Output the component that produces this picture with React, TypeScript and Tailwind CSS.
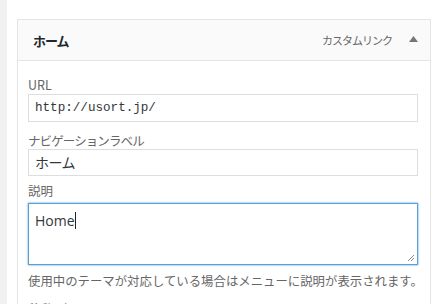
import React from 'react';

const jp = "font-['Noto_Sans_CJK_JP','Noto_Sans',sans-serif]";

export default function App() {
  return (
    <div className={`flex h-[304px] w-[444px] overflow-hidden bg-white ${jp}`}>
      <div className="w-[7px] shrink-0 bg-[#f1f1f1]" />
      <div className="pl-[10px] pt-[19px]">
        <div className="w-[414px] border border-b-0 border-[#e5e5e5]">
          {/* header */}
          <div className="flex h-[41px] items-center border-b border-[#e5e5e5] bg-[#fafafa] pl-[15px] pr-[12px]">
            <span className="text-[13px] font-bold leading-none tracking-[-1px] text-[#23282d]">ホーム</span>
            <span className="ml-auto text-[11px] leading-none tracking-[-1px] text-[#666]">カスタムリンク</span>
            <svg width="9" height="6" viewBox="0 0 9 6" className="ml-[17px] mb-[3px]">
              <path d="M0 6 L4.5 0 L9 6 Z" fill="#72777c" />
            </svg>
          </div>

          {/* body */}
          <div className="pl-[10px] pr-[12px] pt-[15px]">
            <div className="h-[18px] text-[12.5px] leading-[18px] text-[#666]">URL</div>
            <div className="flex h-[28px] items-center border border-[#ddd] px-[6px] font-['Liberation_Mono',monospace] text-[12.6px] text-[#32373c]">
              http://usort.jp/
            </div>

            <div className="mt-[10px] h-[17px] text-[12.5px] leading-[17px] tracking-[-0.9px] text-[#666]">ナビゲーションラベル</div>
            <div className="flex h-[27px] items-center border border-[#ddd] px-[6px] text-[14px] tracking-[-0.5px] text-[#32373c]">
              ホーム
            </div>

            <div className="mt-[6px] h-[18px] text-[12.5px] leading-[18px] text-[#666]">説明</div>
            <div className="relative mt-[3px] h-[62px] border border-[#5b9dd9] px-[6px] pt-[3px] shadow-[0_0_2px_rgba(30,140,190,0.8)]">
              <span className="font-['Open_Sans',sans-serif] text-[14px] leading-[20px] text-[#32373c]">Home</span>
              <span className="inline-block h-[17px] w-px translate-y-[3px] bg-[#222]" />
              <svg width="8" height="8" viewBox="0 0 8 8" className="absolute bottom-[2px] right-[2px]">
                <path d="M7 1 L1 7 M7 4 L4 7" stroke="#888" strokeWidth="1" />
              </svg>
            </div>

            <div className="mt-[7px] h-[18px] whitespace-nowrap text-[12.4px] leading-[18px] text-[#666]">
              使用中のテーマが対応している場合はメニューに説明が表示されます。
            </div>
            <div className="mt-[10px] text-[12.5px] leading-[18px] text-[#666]">
              移動 <a className="ml-[4px] text-[#0073aa]">上へ一つ</a> <a className="text-[#0073aa]">下へ一つ</a>
            </div>
          </div>
        </div>
      </div>
    </div>
  );
}
